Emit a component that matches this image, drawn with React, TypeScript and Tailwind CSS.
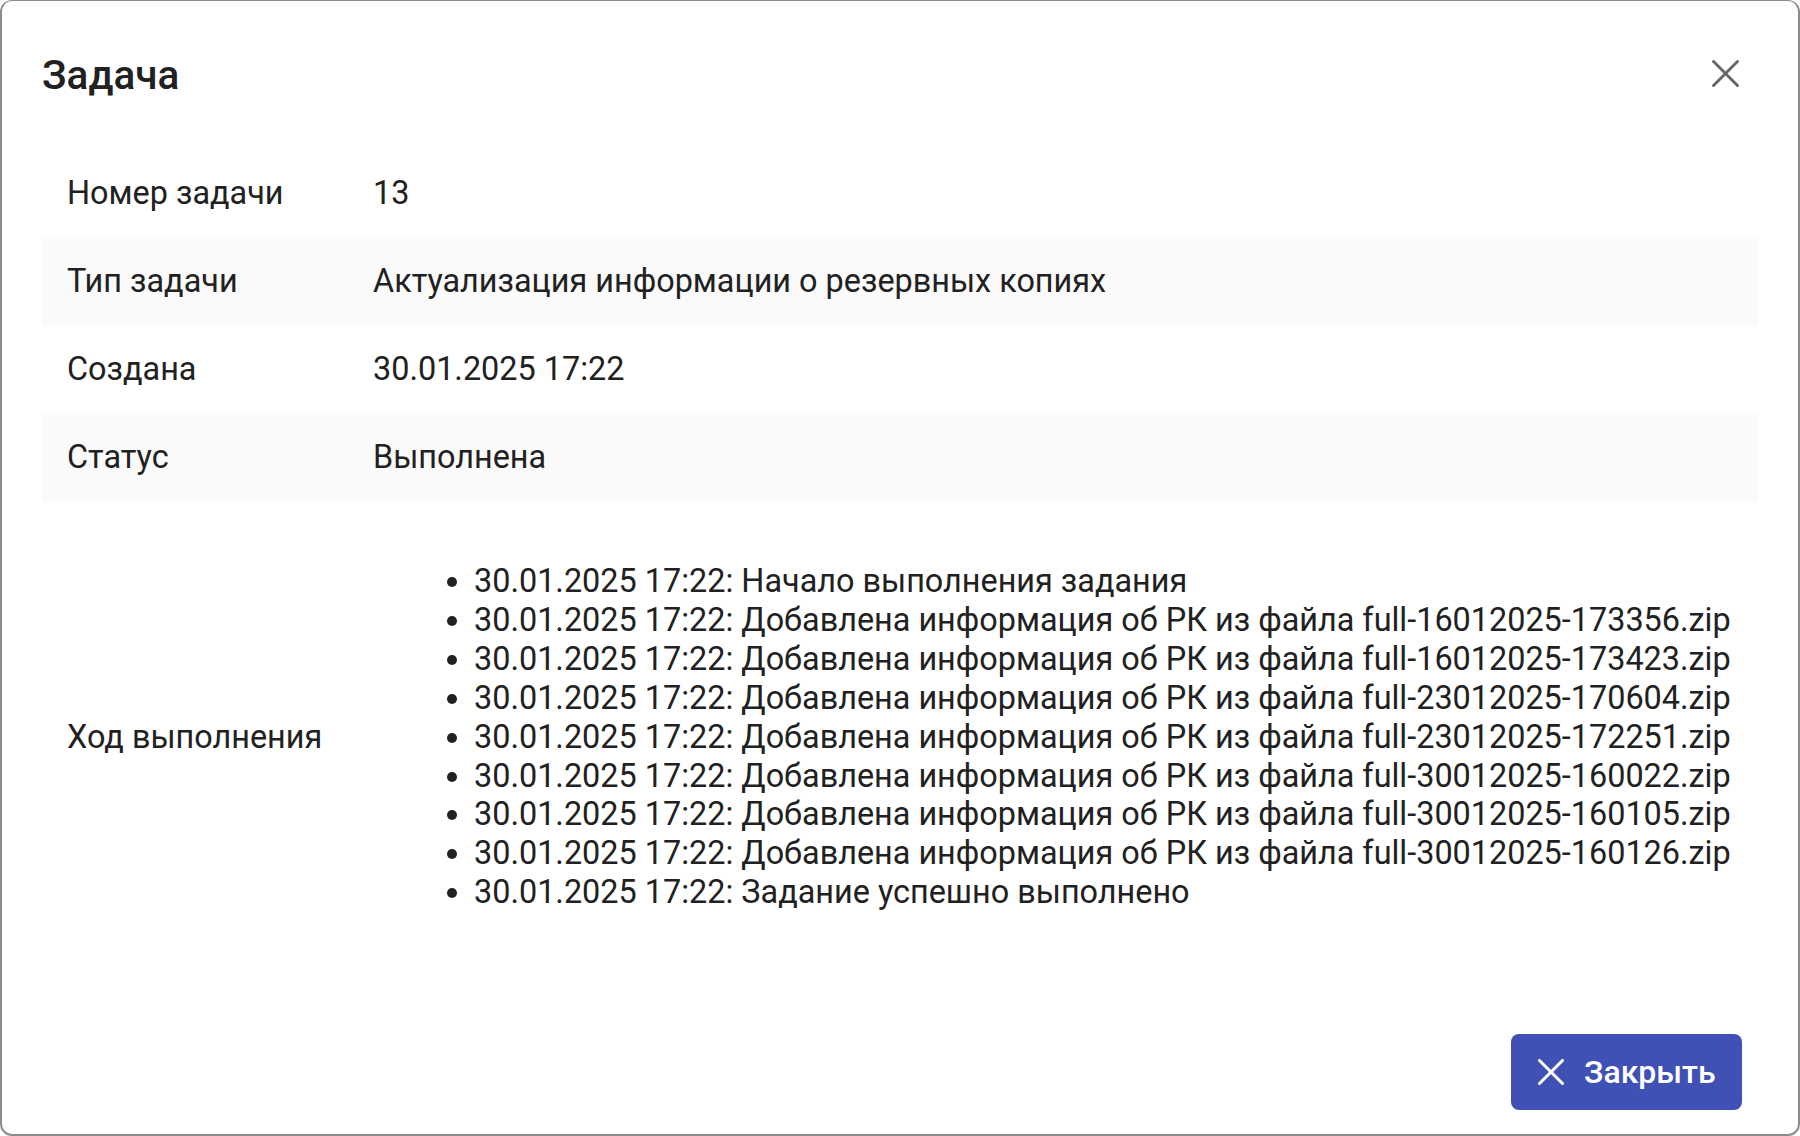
import React from 'react';

const rows: { label: string; value: string; striped: boolean }[] = [
  { label: 'Номер задачи', value: '13', striped: false },
  { label: 'Тип задачи', value: 'Актуализация информации о резервных копиях', striped: true },
  { label: 'Создана', value: '30.01.2025 17:22', striped: false },
  { label: 'Статус', value: 'Выполнена', striped: true },
];

const progress: string[] = [
  '30.01.2025 17:22: Начало выполнения задания',
  '30.01.2025 17:22: Добавлена информация об РК из файла full-16012025-173356.zip',
  '30.01.2025 17:22: Добавлена информация об РК из файла full-16012025-173423.zip',
  '30.01.2025 17:22: Добавлена информация об РК из файла full-23012025-170604.zip',
  '30.01.2025 17:22: Добавлена информация об РК из файла full-23012025-172251.zip',
  '30.01.2025 17:22: Добавлена информация об РК из файла full-30012025-160022.zip',
  '30.01.2025 17:22: Добавлена информация об РК из файла full-30012025-160105.zip',
  '30.01.2025 17:22: Добавлена информация об РК из файла full-30012025-160126.zip',
  '30.01.2025 17:22: Задание успешно выполнено',
];

const CloseIcon: React.FC<{ className?: string; stroke?: number }> = ({ className, stroke = 2.6 }) => (
  <svg viewBox="0 0 26 26" className={className} fill="none" stroke="currentColor" strokeWidth={stroke} strokeLinecap="round">
    <line x1="1.5" y1="1.5" x2="24.5" y2="24.5" />
    <line x1="24.5" y1="1.5" x2="1.5" y2="24.5" />
  </svg>
);

export default function App() {
  return (
    <div className="box-border flex h-[1136px] w-[1800px] flex-col overflow-hidden rounded-[12px] border-x-2 border-t border-b-2 border-[#8c8c8c] bg-white font-['Roboto',sans-serif] text-[#212121]">
      {/* header */}
      <div className="mt-[50px] flex h-[48px] items-center justify-between pl-[40px] pr-[59px]">
        <h2 className="text-[40.5px] font-medium leading-[48px]">Задача</h2>
        <button className="-mt-[4px] text-[#666666]">
          <CloseIcon className="h-[27px] w-[27px]" stroke={2.8} />
        </button>
      </div>

      {/* details */}
      <div className="mx-[40px] mt-[50px] text-[32.4px]">
        {rows.map((r) => (
          <div key={r.label} className={`flex h-[88px] items-center ${r.striped ? 'bg-[#fafafa]' : ''}`}>
            <div className="w-[306px] shrink-0 pl-[25px]">{r.label}</div>
            <div className="pl-[25px]">{r.value}</div>
          </div>
        ))}
        <div className="flex items-center pt-[61px] pb-[61px]">
          <div className="w-[306px] shrink-0 pl-[25px]">Ход выполнения</div>
          <ul className="list-disc pl-[126px] leading-[38.9px]">
            {progress.map((p, i) => (
              <li key={i}>{p}</li>
            ))}
          </ul>
        </div>
      </div>

      <div className="flex-1" />

      {/* footer */}
      <div className="flex justify-end pb-[24px] pr-[56px]">
        <button className="flex h-[76px] w-[231px] items-center gap-[20px] rounded-[8px] bg-[#3f51b5] pl-[27px] text-[32px] font-medium text-white">
          <CloseIcon className="h-[26px] w-[26px]" stroke={3} />
          <span>Закрыть</span>
        </button>
      </div>
    </div>
  );
}
